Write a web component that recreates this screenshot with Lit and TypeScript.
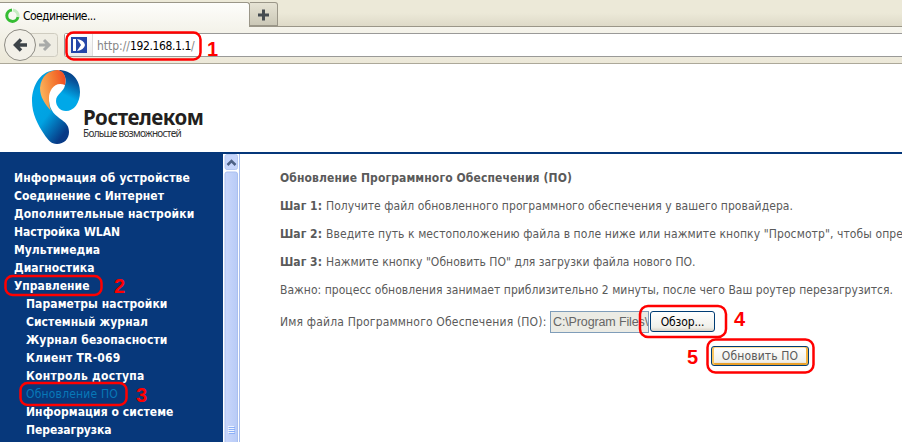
import { LitElement, html, css, svg } from "lit";
import { customElement, property } from "lit/decorators.js";

/** A line of text whose tracking is adjusted so that it fills a given width. */
@customElement("fit-text")
class FitText extends LitElement {
  @property({ type: Number }) w = 0;
  static styles = css`
    :host { display: inline-block; white-space: pre; vertical-align: baseline; }
  `;
  render() {
    return html`<slot></slot>`;
  }
  firstUpdated() {
    const n = (this.textContent || "").length;
    const cur = this.getBoundingClientRect().width;
    if (n && this.w) this.style.letterSpacing = `${(this.w - cur) / n}px`;
  }
}

const MENU: [string, number][] = [
  ["Информация об устройстве", 176],
  ["Соединение с Интернет", 150],
  ["Дополнительные настройки", 180.5],
  ["Настройка WLAN", 106],
  ["Мультимедиа", 86],
  ["Диагностика", 80.5],
  ["Управление", 75.5],
];
const SUB: [string, number][] = [
  ["Параметры настройки", 141.5],
  ["Системный журнал", 122],
  ["Журнал безопасности", 141.5],
  ["Клиент TR-069", 94.5],
  ["Контроль доступа", 118.5],
  ["Обновление ПО", 92],
  ["Информация о системе", 147.5],
  ["Перезагрузка", 85.5],
];
const STEPS: [string, string, number][] = [
  ["Шаг 1:", "Получите файл обновленного программного обеспечения у вашего провайдера.", 467],
  ["Шаг 2:", "Введите путь к местоположению файла в поле ниже или нажмите кнопку \"Просмотр\", чтобы опре", 577],
  ["Шаг 3:", "Нажмите кнопку \"Обновить ПО\" для загрузки файла нового ПО.", 369.5],
];

@customElement("app-root")
class AppRoot extends LitElement {
  static styles = css`
    :host { display: block; position: relative; width: 902px; height: 442px; overflow: hidden; background: #fff; font: 12px/18px "DejaVu Sans Condensed", "DejaVu Sans", sans-serif; color: #5a5a5a; }
    * { box-sizing: border-box; }
    svg { display: block; }
    .tabs { height: 27px; display: flex; background: linear-gradient(#ece9d8 50%, #dedac8); border-bottom: 1px solid #9a9688; }
    .tab { width: 250px; height: 25px; margin-top: 2px; padding: 5px 0 0 5px; display: flex; gap: 3px; border: 1px solid #9a9688; border-width: 1px 1px 0 0; border-radius: 0 3px 0 0; background: linear-gradient(#fdfdfb, #f5f4ec); color: #000; line-height: 17px; }
    .plus { width: 28px; height: 24px; margin-top: 2px; border: 1px solid #9a9688; border-left: 0; border-radius: 0 3px 0 0; background: linear-gradient(#e6e3d4, #cbc8b7); }
    .nav { height: 37px; display: flex; padding-left: 4px; background: linear-gradient(#f5f4ec, #ece8d8); border-bottom: 1px solid #aca899; }
    .arrows { width: 60px; flex: none; }
    .url { flex: 1; height: 24px; margin-top: 6px; border: 1px solid #9a9a98; border-right: 0; border-radius: 3px 0 0 3px; background: #fff; display: flex; color: #858585; }
    .site { width: 28px; padding: 3px 0 0 6px; background: linear-gradient(#fff, #ececec); border-right: 1px solid #ddd; }
    .addr { padding: 4px 0 0 4px; line-height: 17px; }
    .addr b { font-weight: 400; color: #000; }
    .head { height: 88px; display: flex; padding: 6px 0 0 30px; }
    .brand { padding-left: 2px; }
    .name { margin-top: 37px; height: 20px; font: 700 20.5px/21px "Noto Sans", sans-serif; color: #231f20; }
    .tag { height: 13px; font: 10px/13px "Noto Sans", sans-serif; color: #333; }
    .name fit-text, .tag fit-text { display: block; width: max-content; }
    .rule { height: 2px; background: #05377a; width: 902px; }
    .body { display: flex; height: 288px; }
    .side { width: 223px; background: #07387b; padding: 15px 0 0 14px; color: #fff; font-weight: 700; }
    .row { height: 18px; line-height: 18px; white-space: nowrap; }
    .sub { padding-left: 12px; }
    .on { font-weight: 400; color: #0778b8; }
    .scroll { width: 17px; background: #fff; border-right: 1px solid #a9bfee; }
    .main { padding: 15px 0 0 40px; width: 662px; white-space: nowrap; overflow: hidden; }
    .line { height: 28px; display: flex; align-items: flex-start; }
    .gap { width: 46px; flex: none; }
    .file { display: flex; margin-top: 2px; height: 22px; }
    .lab { width: 270px; padding-top: 2px; }
    .path { width: 99px; height: 22px; border: 1px solid #7f9db9; background: #ebebe4; padding: 0 0 0 2px; font: 12.5px/21px "Liberation Sans", sans-serif; overflow: hidden; color: #666; }
    .btn { border: 1px solid #003c74; border-radius: 3px; background: linear-gradient(#fff, #f0f0ea 80%, #d8d2c6); height: 21px; text-align: center; line-height: 20px; color: #000; }
    .browse { width: 65px; margin-left: 1px; }
    .update { width: 98px; height: 20px; margin: 13px 0 0 431px; line-height: 19px; color: #5a5a5a; box-shadow: inset 2px 0 #fac761, inset -2px 0 #f4b23c, inset 0 1px #fde0a0, inset 0 -2px #e9a02a; }
    .marks { position: absolute; left: 0; top: 0; font: 700 20px "Liberation Sans", sans-serif; fill: #f00; }
  `;

  logo() {
    return svg`
      <defs>
        <linearGradient id="bl" x1="0" y1="0" x2=".65" y2="1"><stop offset="0" stop-color="#0878bd"/><stop offset=".25" stop-color="#00a8e8"/><stop offset=".62" stop-color="#00a2e2"/><stop offset="1" stop-color="#073a86"/></linearGradient>
        <linearGradient id="br" x1=".7" y1="0" x2=".4" y2="1"><stop offset="0" stop-color="#06377d"/><stop offset=".25" stop-color="#07549b"/><stop offset=".65" stop-color="#00a8e8"/></linearGradient>
        <linearGradient id="or" x1="0" y1=".5" x2="1" y2=".2"><stop offset="0" stop-color="#fbb45c"/><stop offset=".55" stop-color="#f47b32"/><stop offset="1" stop-color="#f04b23"/></linearGradient>
      </defs>
      <path fill="url(#bl)" d="M27 0C11 0 2 15 2 31C2 44 8 55 14 64C18 70 21 74 27 74C34 74 39 69 39 62C39 56 36 53 32 50C25 45 20 41 19 31C16 20 17 8 28 0Z"/>
      <path fill="url(#br)" d="M28 0C42 0 50 10 50 22C50 33 44 41 36 41C30 41 26 36 26 31C26 24 34 22 35 15C37 8 34 2 28 0Z"/>
      <path fill="url(#or)" d="M10 18C11 6 19 0 28 0C34 1 37 8 35 15C25 11 19 20 19 28C19 33 19.500 37 21 41C15 34 10 27 10 18Z"/>`;
  }

  render() {
    return html`
      <div class="tabs">
        <div class="tab">
          <svg width="15" height="16" fill="none" stroke-width="3"><path d="M7 2A5.700 5.700 0 1 0 13 9" stroke="#35bd33"/><path d="M13 9A6 6 0 0 0 8 2" stroke="#c8ecc4"/></svg>
          <fit-text w="72.500">Соединение...</fit-text>
        </div>
        <div class="plus"><svg width="27" height="22"><path d="M8 12h11M13.500 6.500v11" stroke="#444b50" stroke-width="3"/></svg></div>
      </div>
      <div class="nav">
        <div class="arrows">
          <svg width="60" height="36">
            <rect x="20" y="6.500" width="33.500" height="23" rx="3" fill="#efede3" stroke="#cfccc0"/>
            <circle cx="16" cy="18" r="15.500" fill="#f2f0e8" stroke="#8d8b83"/>
            <path d="M11 18h12M17 12.500l-5.500 5.500 5.500 5.500" fill="none" stroke="#3c4348" stroke-width="3.500"/>
            <path d="M35 18h10M40 13l5 5-5 5" fill="none" stroke="#a9aba9" stroke-width="3"/>
          </svg>
        </div>
        <div class="url">
          <div class="site"><svg width="17" height="17"><rect width="16" height="16" fill="#2546a8"/><path d="M2 2h3v12H2zM6 2q7 1 8 6q-1 5-8 6l4-6z" fill="#fff"/></svg></div>
          <div class="addr"><fit-text w="33">http://</fit-text><b><fit-text w="61">192.168.1.1</fit-text></b>/</div>
        </div>
      </div>
      <div class="head">
        <svg width="51" height="78">${this.logo()}</svg>
        <div class="brand">
          <div class="name"><fit-text w="120.500">Ростелеком</fit-text></div>
          <div class="tag"><fit-text w="98">Больше возможностей</fit-text></div>
        </div>
      </div>
      <div class="rule"></div>
      <div class="body">
        <div class="side">
          ${MENU.map(([t, w]) => html`<div class="row"><fit-text w=${w}>${t}</fit-text></div>`)}
          ${SUB.map(([t, w], i) => html`<div class="row sub ${i === 5 ? "on" : ""}"><fit-text w=${w}>${t}</fit-text></div>`)}
        </div>
        <div class="scroll">
          <svg width="16" height="288">
            <defs><linearGradient id="sb"><stop offset="0" stop-color="#c9d7fc"/><stop offset="1" stop-color="#b8cbf6"/></linearGradient></defs>
            <rect x="2" y=".5" width="12.500" height="15" rx="2" fill="#c6d5fb" stroke="#b5c8f0"/>
            <path d="M4.500 11l4-4 4 4" fill="none" stroke="#4d6185" stroke-width="2.500"/>
            <rect x="2" y="18" width="12.500" height="280" rx="2" fill="url(#sb)" stroke="#a9bff0"/>
            <path d="M5 272.500h6M5 274.500h6M5 276.500h6M5 278.500h6" stroke="#eef4fe"/>
            <path d="M6 273.500h6M6 275.500h6M6 277.500h6M6 279.500h6" stroke="#8cb0f8"/>
          </svg>
        </div>
        <div class="main">
          <div class="line"><b><fit-text w="292">Обновление Программного Обеспечения (ПО)</fit-text></b></div>
          ${STEPS.map(([s, t, w]) => html`<div class="line"><b class="gap"><fit-text w="42">${s}</fit-text></b><fit-text w=${w}>${t}</fit-text></div>`)}
          <div class="line"><fit-text w="613">Важно: процесс обновления занимает приблизительно 2 минуты, после чего Ваш роутер перезагрузится.</fit-text></div>
          <div class="file">
            <div class="lab"><fit-text w="266.500">Имя файла Программного Обеспечения (ПО):</fit-text></div>
            <div class="path"><fit-text w="95">C:\\Program Files\\</fit-text></div>
            <div class="btn browse"><fit-text w="43.500">Обзор...</fit-text></div>
          </div>
          <div class="btn update"><fit-text w="76.500">Обновить ПО</fit-text></div>
        </div>
      </div>
      <svg class="marks" width="902" height="442">
        <g fill="none" stroke="#f00" stroke-width="2.500">
          <rect x="66.500" y="32.500" width="134" height="27" rx="7"/>
          <rect x="5.500" y="276" width="96" height="19" rx="7"/>
          <rect x="20.500" y="383" width="106" height="22" rx="7"/>
          <rect x="640" y="306" width="86" height="31" rx="8"/>
          <rect x="707.500" y="339.500" width="106" height="33" rx="8"/>
        </g>
        <text x="207" y="56">1</text><text x="114" y="293">2</text><text x="136" y="402">3</text><text x="734" y="326">4</text><text x="687" y="364">5</text>
      </svg>`;
  }
}
